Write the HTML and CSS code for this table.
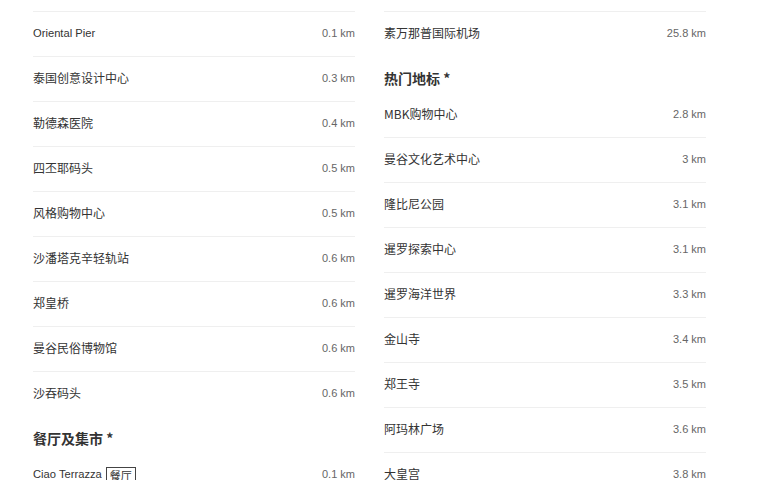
FILE: index.html
```html
<!DOCTYPE html>
<html lang="zh">
<head>
<meta charset="utf-8">
<link rel="stylesheet" href="styles.css">
</head>
<body>
<div class="page">
  <div class="col">
    <div class="group first">
      <div class="row"><span class="name latin">Oriental Pier</span><span class="dist">0.1 km</span></div>
      <div class="row"><span class="name">泰国创意设计中心</span><span class="dist">0.3 km</span></div>
      <div class="row"><span class="name">勒德森医院</span><span class="dist">0.4 km</span></div>
      <div class="row"><span class="name">四丕耶码头</span><span class="dist">0.5 km</span></div>
      <div class="row"><span class="name">风格购物中心</span><span class="dist">0.5 km</span></div>
      <div class="row"><span class="name">沙潘塔克辛轻轨站</span><span class="dist">0.6 km</span></div>
      <div class="row"><span class="name">郑皇桥</span><span class="dist">0.6 km</span></div>
      <div class="row"><span class="name">曼谷民俗博物馆</span><span class="dist">0.6 km</span></div>
      <div class="row"><span class="name">沙吞码头</span><span class="dist">0.6 km</span></div>
    </div>
    <div class="group">
      <h3 class="heading">餐厅及集市 *</h3>
      <div class="row"><span class="name"><span class="latin">Ciao Terrazza</span><span class="tag">餐厅</span></span><span class="dist">0.1 km</span></div>
    </div>
  </div>
  <div class="col">
    <div class="group first">
      <div class="row"><span class="name">素万那普国际机场</span><span class="dist">25.8 km</span></div>
    </div>
    <div class="group">
      <h3 class="heading">热门地标 *</h3>
      <div class="row"><span class="name">MBK购物中心</span><span class="dist">2.8 km</span></div>
      <div class="row"><span class="name">曼谷文化艺术中心</span><span class="dist">3 km</span></div>
      <div class="row"><span class="name">隆比尼公园</span><span class="dist">3.1 km</span></div>
      <div class="row"><span class="name">暹罗探索中心</span><span class="dist">3.1 km</span></div>
      <div class="row"><span class="name">暹罗海洋世界</span><span class="dist">3.3 km</span></div>
      <div class="row"><span class="name">金山寺</span><span class="dist">3.4 km</span></div>
      <div class="row"><span class="name">郑王寺</span><span class="dist">3.5 km</span></div>
      <div class="row"><span class="name">阿玛林广场</span><span class="dist">3.6 km</span></div>
      <div class="row"><span class="name">大皇宫</span><span class="dist">3.8 km</span></div>
    </div>
  </div>
</div>
</body>
</html>
```
FILE: styles.css
```css
html, body {
  margin: 0;
  padding: 0;
  background: #fff;
  overflow: hidden;
}
body {
  font-family: "Noto Sans CJK SC", sans-serif;
  color: #333;
  font-size: 12px;
  line-height: 18px;
}
.page {
  display: grid;
  grid-template-columns: 322px 322px;
  column-gap: 29px;
  padding: 11px 0 0 33px;
}
.group.first {
  border-top: 1px solid #efefef;
}
.row {
  display: flex;
  justify-content: space-between;
  align-items: center;
  height: 42px;
  padding-bottom: 2px;
  border-bottom: 1px solid #efefef;
}
.row:last-child {
  border-bottom: none;
}
.name {
  color: #333;
  display: flex;
  align-items: center;
  gap: 4px;
}
.latin {
  font-family: "Liberation Sans", Arial, sans-serif;
  font-size: 11.2px;
}
.dist {
  font-family: "Liberation Sans", Arial, sans-serif;
  font-size: 11px;
  color: #666;
}
.heading {
  margin: 0;
  padding: 12px 0 5px;
  font-size: 14px;
  line-height: 20px;
  font-weight: 600;
  color: #333;
}
.tag {
  border: 1px solid #444;
  font-size: 11px;
  line-height: 14px;
  padding: 0 3px;
  margin-top: 1px;
}
```
